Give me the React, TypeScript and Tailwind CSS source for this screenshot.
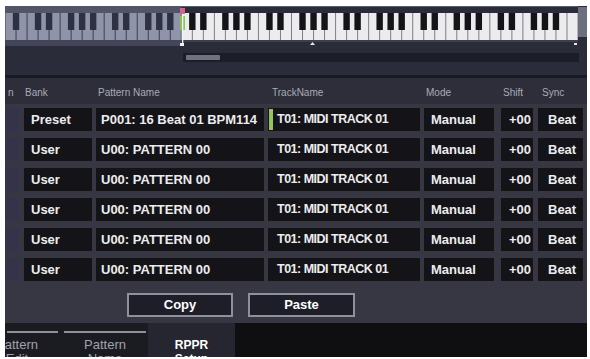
import React from "react";

type Row = {
  bank: string;
  pattern: string;
  track: string;
  mode: string;
  shift: string;
  sync: string;
  current?: boolean;
};

const rows: Row[] = [
  { bank: "Preset", pattern: "P001: 16 Beat 01 BPM114", track: "T01: MIDI TRACK 01", mode: "Manual", shift: "+00", sync: "Beat", current: true },
  { bank: "User", pattern: "U00: PATTERN 00", track: "T01: MIDI TRACK 01", mode: "Manual", shift: "+00", sync: "Beat" },
  { bank: "User", pattern: "U00: PATTERN 00", track: "T01: MIDI TRACK 01", mode: "Manual", shift: "+00", sync: "Beat" },
  { bank: "User", pattern: "U00: PATTERN 00", track: "T01: MIDI TRACK 01", mode: "Manual", shift: "+00", sync: "Beat" },
  { bank: "User", pattern: "U00: PATTERN 00", track: "T01: MIDI TRACK 01", mode: "Manual", shift: "+00", sync: "Beat" },
  { bank: "User", pattern: "U00: PATTERN 00", track: "T01: MIDI TRACK 01", mode: "Manual", shift: "+00", sync: "Beat" },
];

const KEY_W = 573 / 52;
const SPLIT = 16; // keys left of this are outside the range

function Keyboard() {
  const whites = Array.from({ length: 52 }, (_, i) => i);
  // 88 keys start on A0, black keys follow A, C, D, F, G
  const blacks = whites.filter((i) => i < 51 && [0, 2, 3, 5, 6].includes(i % 7));

  return (
    <svg width="582" height="40" viewBox="0 0 582 40" className="block">
      <rect x="0" y="0" width="582" height="40" fill="#2b2c39" />
      <rect x="0" y="0" width="176" height="7" fill="#515567" />
      <rect x="176" y="0" width="397" height="1" fill="#5a5d6b" />
      <rect x="0" y="7" width="176" height="27" fill="#3c3f52" />
      <rect x="176" y="7" width="397" height="27" fill="#7c7d86" />
      {whites.map((i) => (
        <rect
          key={i}
          x={i * KEY_W + 0.5}
          y="7"
          width={KEY_W - 1}
          height="27"
          fill={i < SPLIT ? "#8f94a8" : "#ececee"}
        />
      ))}
      {blacks.map((i) => (
        <rect
          key={"b" + i}
          x={(i + 1) * KEY_W - 3.2}
          y="7"
          width="6.4"
          height="17"
          fill={i < SPLIT ? "#2e3144" : "#141418"}
        />
      ))}
      <rect x="0" y="34" width="176" height="6" fill="#43465a" />
      <rect x="176" y="34" width="397" height="2" fill="#3e3f4b" />
      {/* right end scroller */}
      <rect x="573" y="1" width="9" height="30" fill="#6c6f7c" />
      {/* split marker */}
      <rect x="175" y="2" width="5" height="6" fill="#d4648a" />
      <rect x="175" y="10" width="5" height="14" fill="#8fc25c" />
      <rect x="177" y="8" width="1.3" height="31" fill="#f2f2f2" />
      <rect x="175" y="37" width="4" height="3" fill="#f2f2f2" />
      <polygon points="305,39 307.5,36 310,39" fill="#e8e8e8" />
      <rect x="569" y="37" width="3" height="2" fill="#e8e8e8" />
    </svg>
  );
}

function Cell({ className, children }: { className: string; children?: React.ReactNode }) {
  return (
    <div className={"h-[23px] bg-[#141418] flex items-center overflow-hidden whitespace-nowrap " + className}>
      {children}
    </div>
  );
}

export default function App() {
  return (
    <div className="w-[590px] h-[359px] bg-white pt-[6px] pl-[5px] overflow-hidden font-['Liberation_Sans',Arial,sans-serif]">
      <div className="w-[582px] h-[351px] bg-[#2b2c39] flex flex-col overflow-hidden">
        {/* keyboard range */}
        <Keyboard />
        <div className="h-[7px]" />
        <div className="h-[9px] ml-[178px] w-[396px] bg-[#1c1d26] flex items-start">
          <div className="ml-[3px] mt-[2px] w-[34px] h-[5px] bg-[#6f727f] rounded-[1px]" />
        </div>
        <div className="h-[13px]" />
        <div className="h-[3px] bg-[#1a1b22]" />

        {/* column titles */}
        <div className="h-[26px] pt-[9px] flex text-[10px] leading-[12px] text-[#a9abb6] bg-[#2d2e3a]">
          <div className="w-[14px] pl-[3px] overflow-hidden">n</div>
          <div className="ml-[5px] w-[68px] pl-[1px]">Bank</div>
          <div className="ml-[4px] w-[168px] pl-[2px]">Pattern Name</div>
          <div className="ml-[4px] w-[152px] pl-[4px]">TrackName</div>
          <div className="ml-[4px] w-[70px] pl-[2px]">Mode</div>
          <div className="ml-[7px] w-[32px] pl-[2px]">Shift</div>
          <div className="ml-[5px] w-[45px] pl-[4px]">Sync</div>
        </div>

        {/* pattern rows */}
        <div className="bg-[#363743] pt-[4px] flex flex-col gap-[7px] text-[13px] font-bold text-[#ececee]">
          {rows.map((r, i) => (
            <div key={i} className="flex">
              <div className="w-[14px] h-[23px] bg-[#34334a]" />
              <Cell className="ml-[5px] w-[68px] pl-[7px]">{r.bank}</Cell>
              <Cell className="ml-[4px] w-[168px] pl-[5px]">{r.pattern}</Cell>
              <Cell className="ml-[4px] w-[152px]">
                {r.current ? (
                  <div className="ml-[1px] w-[4px] h-[21px] bg-[#97c35c]" />
                ) : (
                  <div className="ml-[1px] w-[4px]" />
                )}
                <span className="ml-[4px] text-[12.5px] tracking-[-0.5px]">{r.track}</span>
              </Cell>
              <Cell className="ml-[4px] w-[70px] pl-[7px]">{r.mode}</Cell>
              <Cell className="ml-[7px] w-[32px] justify-end pr-[2px]">{r.shift}</Cell>
              <Cell className="ml-[5px] w-[45px] pl-[10px]">{r.sync}</Cell>
            </div>
          ))}
          <div className="flex gap-[15px] ml-[122px] mt-[5px] mb-[6px]">
            <button className="w-[106px] h-[24px] border-2 border-[#8e909c] bg-[#1d1e28] text-white text-[13px] font-bold">
              Copy
            </button>
            <button className="w-[107px] h-[24px] border-2 border-[#8e909c] bg-[#1d1e28] text-white text-[13px] font-bold">
              Paste
            </button>
          </div>
        </div>

        {/* page tabs */}
        <div className="flex-1 flex bg-[#0f0f12] overflow-hidden">
          <div className="w-[57px] bg-[#1b1c22] pt-[8px] overflow-hidden flex justify-end">
            <div className="shrink-0 w-[86px] pr-[4px]">
              <div className="h-[2px] ml-[31px] bg-[#8e909a]" />
              <div className="pt-[5px] text-center text-[13px] leading-[14px] text-[#a0a2ac]">
                Pattern
                <br />
                Edit
              </div>
            </div>
          </div>
          <div className="w-[86px] bg-[#1b1c22] pt-[8px]">
            <div className="h-[2px] mx-[2px] bg-[#8e909a]" />
            <div className="pt-[5px] text-center text-[13px] leading-[14px] text-[#a0a2ac]">
              Pattern
              <br />
              Name
            </div>
          </div>
          <div className="w-[87px] bg-[#25262f] pt-[15px] text-center text-[12px] leading-[14px] font-bold text-white">
            RPPR
            <br />
            Setup
          </div>
        </div>
      </div>
    </div>
  );
}
